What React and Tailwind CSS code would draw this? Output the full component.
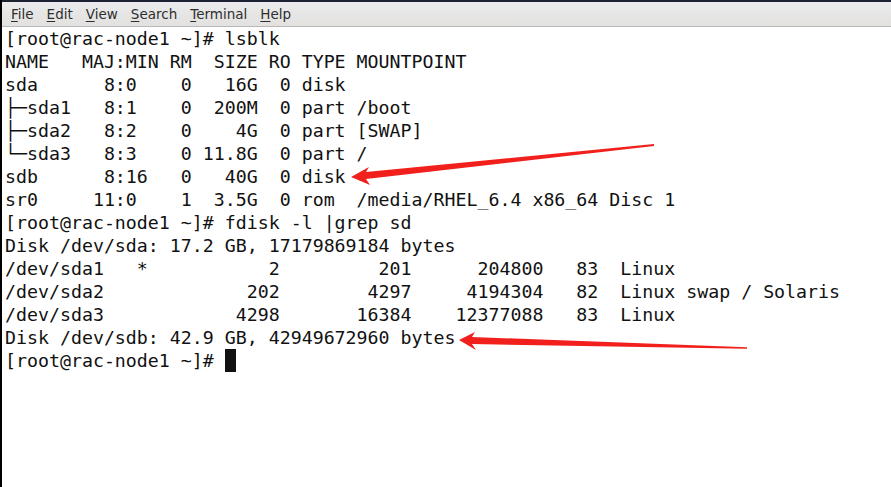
const MENU = [
  { key: "F", rest: "ile" },
  { key: "E", rest: "dit" },
  { key: "V", rest: "iew" },
  { key: "S", rest: "earch" },
  { key: "T", rest: "erminal" },
  { key: "H", rest: "elp" },
];

const LINES = [
  "[root@rac-node1 ~]# lsblk",
  "NAME   MAJ:MIN RM  SIZE RO TYPE MOUNTPOINT",
  "sda      8:0    0   16G  0 disk",
  "├─sda1   8:1    0  200M  0 part /boot",
  "├─sda2   8:2    0    4G  0 part [SWAP]",
  "└─sda3   8:3    0 11.8G  0 part /",
  "sdb      8:16   0   40G  0 disk",
  "sr0     11:0    1  3.5G  0 rom  /media/RHEL_6.4 x86_64 Disc 1",
  "[root@rac-node1 ~]# fdisk -l |grep sd",
  "Disk /dev/sda: 17.2 GB, 17179869184 bytes",
  "/dev/sda1   *           2         201      204800   83  Linux",
  "/dev/sda2             202        4297     4194304   82  Linux swap / Solaris",
  "/dev/sda3            4298       16384    12377088   83  Linux",
  "Disk /dev/sdb: 42.9 GB, 42949672960 bytes",
];

export default function App() {
  return (
    <div className="relative w-[891px] h-[487px] overflow-hidden bg-white border-l-2 border-black flex flex-col">
      <div className="h-[2px] bg-[#1c2233]" />

      {/* menu bar */}
      <div className="h-[25px] flex items-center gap-[13px] pl-[9px] bg-gradient-to-b from-[#ebebee] to-[#e2e1de] border-b border-[#b9b9b9] font-['DejaVu_Sans',sans-serif] text-[13.5px] text-[#2e2e2e]">
        {MENU.map((m) => (
          <span key={m.key}>
            <span className="underline underline-offset-2">{m.key}</span>
            {m.rest}
          </span>
        ))}
      </div>

      {/* terminal */}
      <div className="flex-1 pl-[3px] font-['DejaVu_Sans_Mono',monospace] text-[18.25px] leading-[23px] text-[#111] whitespace-pre">
        {LINES.map((line, i) => (
          <div key={i}>{line}</div>
        ))}
        <div>
          [root@rac-node1 ~]#{" "}
          <span className="inline-block w-[11px] h-[23px] bg-[#111] align-top" />
        </div>
      </div>

      {/* annotation arrows */}
      <svg className="absolute left-0 top-0" width="891" height="487" viewBox="0 0 891 487">
        <polygon
          fill="#f2201c"
          points="349,177 367,167 364,172 652,144 652,146 364,179 368,185"
        />
        <polygon
          fill="#f2201c"
          points="457,340 473,332 470,337 745,347.2 745,348.8 470,344 474,350"
        />
      </svg>
    </div>
  );
}
